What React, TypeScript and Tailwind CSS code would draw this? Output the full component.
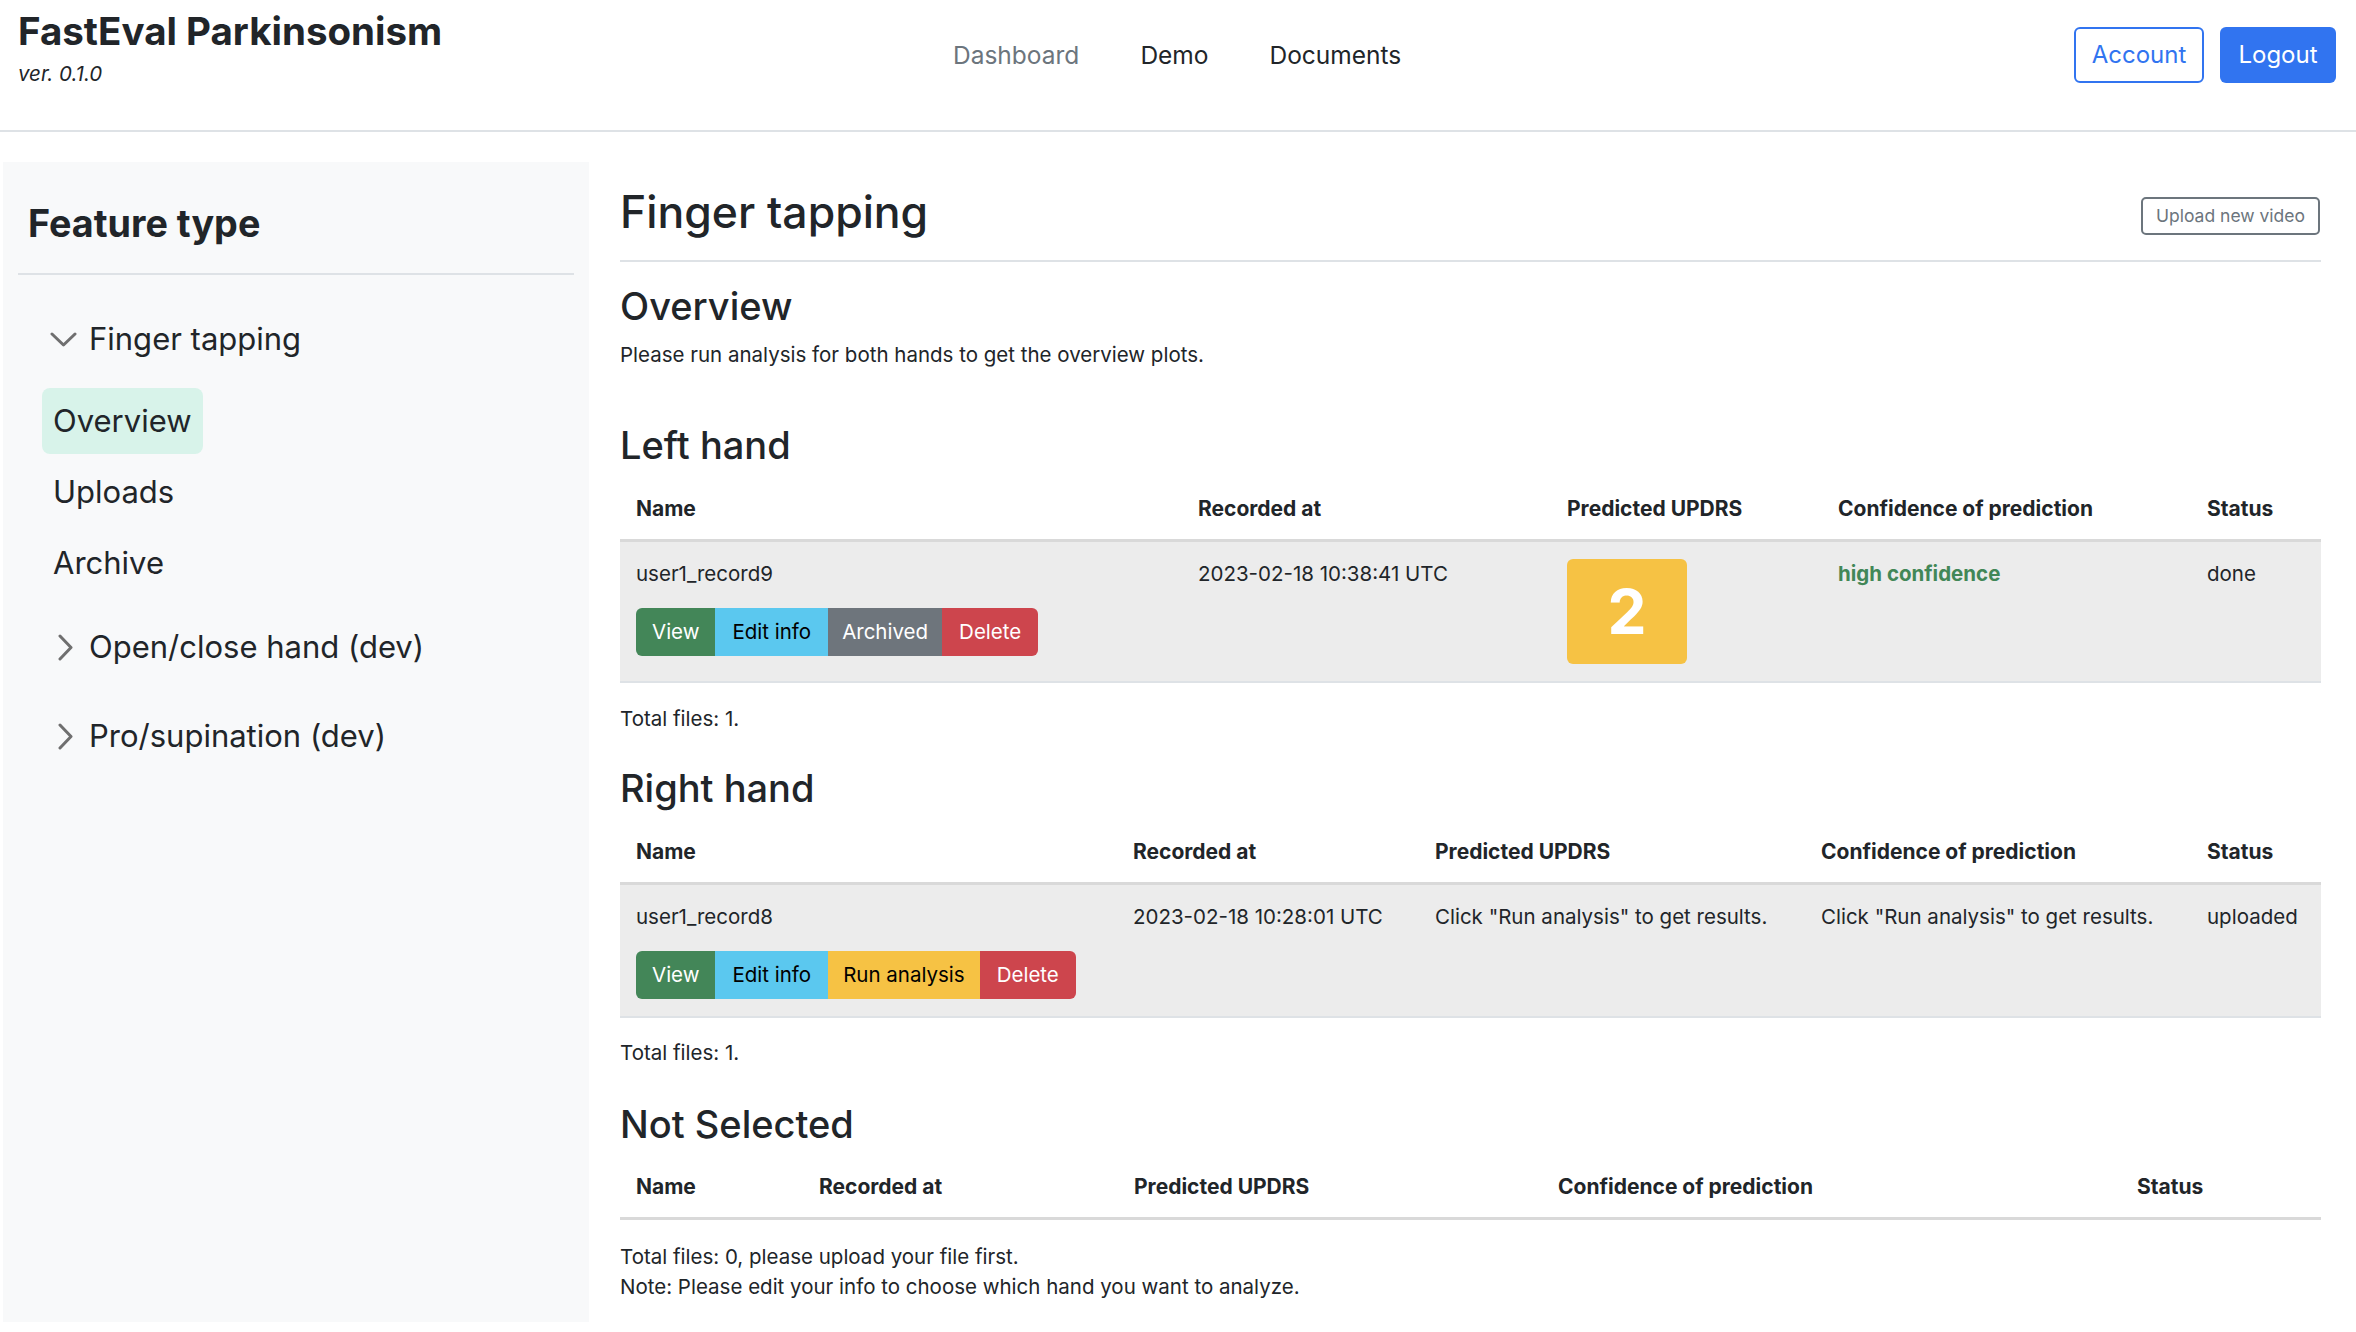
import React from "react";

type Btn = { label: string; cls: string };

function BtnGroup({ items }: { items: Btn[] }) {
  return (
    <div className="inline-flex rounded-[6px] overflow-hidden">
      {items.map((it) => (
        <button key={it.label} className={it.cls}>
          {it.label}
        </button>
      ))}
    </div>
  );
}

const btnBase = "h-[48px] text-[20.5px] leading-[48px]";
const viewBtn: Btn = { label: "View", cls: btnBase + " px-[16px] bg-[#438658] text-white" };
const editBtn: Btn = { label: "Edit info", cls: btnBase + " px-[17px] bg-[#5bc8ef] text-black" };
const archBtn: Btn = { label: "Archived", cls: btnBase + " px-[14px] bg-[#6e757c] text-white" };
const runBtn: Btn = { label: "Run analysis", cls: btnBase + " px-[15px] bg-[#f6c244] text-black" };
const delBtn: Btn = { label: "Delete", cls: btnBase + " px-[17px] bg-[#cd454d] text-white" };

function ChevronDown() {
  return (
    <svg width="27" height="17" viewBox="0 0 27 17" fill="none">
      <polyline points="2,3 13.5,14 25,3" stroke="#6f6f6f" strokeWidth="3" strokeLinecap="round" strokeLinejoin="round" />
    </svg>
  );
}

function ChevronRight() {
  return (
    <svg width="18" height="27" viewBox="0 0 18 27" fill="none">
      <polyline points="3,2 14,13.5 3,25" stroke="#6f6f6f" strokeWidth="3" strokeLinecap="round" strokeLinejoin="round" />
    </svg>
  );
}

const th = "text-left font-bold text-[21px] leading-[29px] px-[16px] pt-[16px] pb-[16px] border-b-[3px] border-[#d9d9d9]";
const td = "align-top text-[20.5px] leading-[29px] px-[16px] py-[17px] bg-[#ececec] border-b-2 border-[#dee2e6]";

export default function App() {
  return (
    <div className="min-h-screen bg-white text-[#212529] font-[Inter,'Noto_Sans',sans-serif]">
      <header className="h-[132px] border-b-2 border-[#dee2e6] flex items-start">
        <div className="w-[953px] shrink-0 pl-[18px] pt-[8px]">
          <div className="text-[38.5px] font-bold leading-[1.2]">FastEval Parkinsonism</div>
          <div className="mt-[8px] text-[20.5px] italic leading-[1.2]">ver. 0.1.0</div>
        </div>
        <nav className="flex gap-[61px] pt-[37px] text-[24.5px] leading-[36px]">
          <a className="text-[#6c757d]">Dashboard</a>
          <a>Demo</a>
          <a>Documents</a>
        </nav>
        <div className="ml-auto flex gap-[16px] pt-[27px] pr-[20px]">
          <button className="h-[56px] w-[130px] border-2 border-[#3174f0] rounded-[6px] text-[#3174f0] text-[24px]">Account</button>
          <button className="h-[56px] w-[116px] bg-[#3174f0] rounded-[6px] text-white text-[24px]">Logout</button>
        </div>
      </header>

      <div className="flex pt-[30px] pl-[3px]">
        <aside className="w-[586px] h-[1160px] shrink-0 bg-[#f8f9fa] px-[15px]">
          <h3 className="pt-[39px] pl-[10px] text-[37.7px] font-bold leading-[1.2]">Feature type</h3>
          <div className="mt-[27px] h-[2px] bg-[#dee2e6]" />
          <div className="mt-[31px] h-[66px] flex items-center pl-[32px] gap-[12px] text-[31px]">
            <ChevronDown />
            <span>Finger tapping</span>
          </div>
          <div className="mt-[16px] flex flex-col gap-[5px] text-[31px]">
            <div className="ml-[24px] self-start h-[66px] flex items-center px-[11px] rounded-[8px] bg-[#d8f3ea]">Overview</div>
            <div className="ml-[24px] h-[66px] flex items-center px-[11px]">Uploads</div>
            <div className="ml-[24px] h-[66px] flex items-center px-[11px]">Archive</div>
          </div>
          <div className="mt-[18px] h-[66px] flex items-center pl-[39px] gap-[14px] text-[31px]">
            <ChevronRight />
            <span>Open/close hand (dev)</span>
          </div>
          <div className="mt-[23px] h-[66px] flex items-center pl-[39px] gap-[14px] text-[31px]">
            <ChevronRight />
            <span>Pro/supination (dev)</span>
          </div>
        </aside>

        <main className="ml-[31px] w-[1701px] shrink-0">
          <div className="flex items-start justify-between pt-[23px]">
            <h1 className="text-[44.5px] font-medium leading-[54px]">Finger tapping</h1>
            <button className="mt-[12px] h-[38px] px-[13px] border-2 border-[#6c757d] rounded-[5px] text-[17.5px] text-[#6c757d] mr-[1px]">Upload new video</button>
          </div>
          <div className="mt-[21px] h-[2px] bg-[#dee2e6]" />
          <h2 className="mt-[21px] text-[38px] font-medium leading-[46px]">Overview</h2>
          <p className="mt-[12px] text-[20.5px] leading-[28.5px]">Please run analysis for both hands to get the overview plots.</p>

          <h2 className="mt-[52px] text-[38px] font-medium leading-[46px]">Left hand</h2>
          <table className="mt-[10px] w-full table-fixed border-collapse">
            <colgroup>
              <col className="w-[562px]" />
              <col className="w-[369px]" />
              <col className="w-[271px]" />
              <col className="w-[369px]" />
              <col className="w-[130px]" />
            </colgroup>
            <thead>
              <tr>
                <th className={th}>Name</th>
                <th className={th}>Recorded at</th>
                <th className={th}>Predicted UPDRS</th>
                <th className={th}>Confidence of prediction</th>
                <th className={th}>Status</th>
              </tr>
            </thead>
            <tbody>
              <tr>
                <td className={td}>
                  <div>user1_record9</div>
                  <div className="mt-[20px]">
                    <BtnGroup items={[viewBtn, editBtn, archBtn, delBtn]} />
                  </div>
                </td>
                <td className={td}>2023-02-18 10:38:41 UTC</td>
                <td className={td}>
                  <div className="w-[120px] h-[105px] rounded-[6px] bg-[#f6c244] flex items-center justify-center text-white font-bold text-[62px]">2</div>
                </td>
                <td className={td}>
                  <span className="font-bold text-[#428757]">high confidence</span>
                </td>
                <td className={td}>done</td>
              </tr>
            </tbody>
          </table>
          <p className="mt-[22px] text-[20.5px] leading-[28.5px]">Total files: 1.</p>

          <h2 className="mt-[32px] text-[38px] font-medium leading-[46px]">Right hand</h2>
          <table className="mt-[10px] w-full table-fixed border-collapse">
            <colgroup>
              <col className="w-[497px]" />
              <col className="w-[302px]" />
              <col className="w-[386px]" />
              <col className="w-[386px]" />
              <col className="w-[130px]" />
            </colgroup>
            <thead>
              <tr>
                <th className={th}>Name</th>
                <th className={th}>Recorded at</th>
                <th className={th}>Predicted UPDRS</th>
                <th className={th}>Confidence of prediction</th>
                <th className={th}>Status</th>
              </tr>
            </thead>
            <tbody>
              <tr>
                <td className={td}>
                  <div>user1_record8</div>
                  <div className="mt-[20px]">
                    <BtnGroup items={[viewBtn, editBtn, runBtn, delBtn]} />
                  </div>
                </td>
                <td className={td}>2023-02-18 10:28:01 UTC</td>
                <td className={td}>Click "Run analysis" to get results.</td>
                <td className={td}>Click "Run analysis" to get results.</td>
                <td className={td}>uploaded</td>
              </tr>
            </tbody>
          </table>
          <p className="mt-[21px] text-[20.5px] leading-[28.5px]">Total files: 1.</p>

          <h2 className="mt-[33px] text-[38px] font-medium leading-[46px]">Not Selected</h2>
          <table className="mt-[9px] w-full table-fixed border-collapse">
            <colgroup>
              <col className="w-[183px]" />
              <col className="w-[315px]" />
              <col className="w-[424px]" />
              <col className="w-[579px]" />
              <col className="w-[200px]" />
            </colgroup>
            <thead>
              <tr>
                <th className={th}>Name</th>
                <th className={th}>Recorded at</th>
                <th className={th}>Predicted UPDRS</th>
                <th className={th}>Confidence of prediction</th>
                <th className={th}>Status</th>
              </tr>
            </thead>
          </table>
          <p className="mt-[22px] text-[20.5px] leading-[30px]">
            Total files: 0, please upload your file first.
            <br />
            Note: Please edit your info to choose which hand you want to analyze.
          </p>
        </main>
      </div>
    </div>
  );
}
